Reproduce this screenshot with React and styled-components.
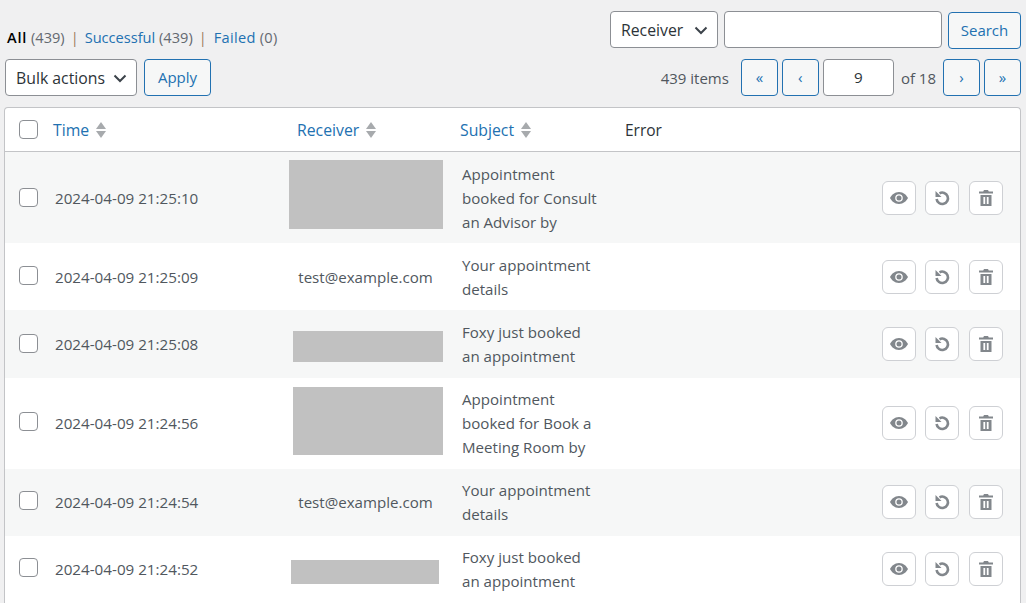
import React from 'react'
import styled, { createGlobalStyle } from 'styled-components'

const GlobalStyle = createGlobalStyle`
	html, body {
		margin: 0;
		padding: 0;
		background: #f0f0f1;
		overflow: hidden;
	}
	body {
		font-family: 'Open Sans', 'Noto Sans', sans-serif;
		font-size: 15.1px;
		color: #50575e;
	}
`

const Page = styled.div`
	width: 1026px;
	height: 603px;
	overflow: hidden;
	padding: 11px 5px 0 5px;
	box-sizing: border-box;
`

const TopRow = styled.div`
	display: flex;
	justify-content: space-between;
	align-items: flex-start;
	height: 48px;
`

const Filters = styled.ul`
	display: flex;
	list-style: none;
	margin: 0;
	padding: 15px 0 0 2px;
	line-height: 22px;
	font-size: 14.6px;
`

const FilterItem = styled.li`
	white-space: pre;
	color: #646970;

	&:last-child {
		margin-left: 1px;
		letter-spacing: 0.3px;
	}
`

const FilterLink = styled.span`
	color: ${(p) => (p.$current ? '#000' : '#2271b1')};
	font-weight: ${(p) => (p.$current ? 600 : 400)};
	letter-spacing: ${(p) => (p.$current ? '0.8px' : 'inherit')};
`

const Sep = styled.span`
	color: #9a7b60;
	margin: 0 6px;
`

const SearchBox = styled.div`
	display: flex;
	gap: 6px;
`

const Select = styled.div`
	display: flex;
	align-items: center;
	justify-content: space-between;
	box-sizing: border-box;
	width: ${(p) => p.$w}px;
	height: 37px;
	padding: 0 8px 0 10px;
	background: #fff;
	border: 1px solid #8c8f94;
	border-radius: 4px;
	color: #2c3338;
	font-size: 15.8px;
`

const TextInput = styled.div`
	box-sizing: border-box;
	width: ${(p) => p.$w}px;
	height: 37px;
	background: #fff;
	border: 1px solid #8c8f94;
	border-radius: 4px;
	color: #2c3338;
	text-align: center;
	line-height: 35px;
	font-size: 15.2px;
`

const Button = styled.div`
	box-sizing: border-box;
	width: ${(p) => p.$w}px;
	height: 37px;
	line-height: 35px;
	margin-top: ${(p) => p.$mt || 0}px;
	text-align: center;
	background: #f6f7f7;
	border: 1px solid #2271b1;
	border-radius: 4px;
	color: #2271b1;
	font-size: 15px;
`

const NavRow = styled.div`
	display: flex;
	justify-content: space-between;
	align-items: center;
	height: 37px;
`

const Group = styled.div`
	display: flex;
	align-items: center;
	gap: ${(p) => p.$gap}px;
`

const Count = styled.span`
	margin-right: 8px;
	font-size: 15px;
`

const PageTotal = styled.span`
	margin: 0 3px;
	font-size: 15px;
`

const Table = styled.div`
	box-sizing: border-box;
	width: 1017px;
	margin: 11px 0 0 -1px;
	background: #fff;
	border: 1px solid #c3c4c7;
	border-bottom: 0;
	border-radius: 4px 4px 0 0;
`

const HeadRow = styled.div`
	display: grid;
	grid-template-columns: 48px 244px 163px 165px 1fr;
	align-items: center;
	height: 43px;
	border-bottom: 1px solid #c3c4c7;
`

const Row = styled.div`
	display: grid;
	grid-template-columns: 50px 230px 177px 172px 1fr;
	align-items: center;
	box-sizing: border-box;
	height: ${(p) => p.$h}px;
	padding-bottom: ${(p) => p.$pb || 0}px;
	background: ${(p) => (p.$alt ? '#f6f7f7' : '#fff')};
`

const CheckCell = styled.div`
	padding-left: 14px;
	margin-bottom: ${(p) => p.$lift || 0}px;
	display: flex;
`

const Checkbox = styled.span`
	display: block;
	box-sizing: border-box;
	width: 19px;
	height: 19px;
	background: #fff;
	border: 1px solid #8c8f94;
	border-radius: 4px;
`

const SortLink = styled.span`
	display: flex;
	align-items: center;
	gap: 6px;
	color: #2271b1;
	font-size: 15.8px;
`

const HeadText = styled.span`
	color: #2c3338;
	font-size: 15.5px;
`

const Time = styled.div`
	white-space: nowrap;
	font-size: 15.2px;
`

const Receiver = styled.div`
	display: flex;
	justify-content: center;
	padding-right: 16px;
	white-space: nowrap;
`

// the grey blocks cover addresses, they do not sit centred in their row
const Redacted = styled.div`
	width: ${(p) => p.$w}px;
	height: ${(p) => p.$h}px;
	margin-left: ${(p) => p.$shift || 0}px;
	margin-top: ${(p) => Math.max(p.$dy, 0) * 2}px;
	margin-bottom: ${(p) => Math.max(-p.$dy, 0) * 2}px;
	background: #c1c1c1;
`

const Subject = styled.div`
	line-height: 24px;
	white-space: nowrap;
`

const Actions = styled.div`
	display: flex;
	justify-content: flex-end;
	gap: 9px;
	padding-right: 17px;
`

const IconButton = styled.div`
	box-sizing: border-box;
	width: 34px;
	height: 34px;
	display: flex;
	align-items: center;
	justify-content: center;
	background: #fff;
	border: 1px solid #ced0d4;
	border-radius: 6px;
	color: #82878c;

	&:last-child {
		margin-left: 1px;
	}
`

const Chevron = () => (
	<svg width='16' height='16' viewBox='0 0 16 16' fill='none' stroke='#3c434a' strokeWidth='2'>
		<path d='M2.5 5.5 8 11l5.5-5.5' />
	</svg>
)

const SortIcon = () => (
	<svg width='12' height='18' viewBox='0 0 12 18' fill='#a7aaad'>
		<path d='M6 1l5 7H1z' />
		<path d='M6 17l5-7H1z' />
	</svg>
)

const EyeIcon = () => (
	<svg width='20' height='20' viewBox='0 0 20 20' fill='currentColor'>
		<path
			fillRule='evenodd'
			d='M10 4C5.500 4 2.400 7.200 1 10c1.400 2.800 4.500 6 9 6s7.600-3.200 9-6c-1.400-2.800-4.500-6-9-6zm0 2.200a3.800 3.800 0 1 1 0 7.600 3.800 3.800 0 0 1 0-7.600zm0 1.300a2.500 2.500 0 1 0 0 5 2.500 2.500 0 0 0 0-5z'
		/>
	</svg>
)

const UndoIcon = () => (
	<svg width='20' height='20' viewBox='0 0 20 20' fill='none' stroke='currentColor' strokeWidth='2.6'>
		<path d='M7.500 5.300A5.700 5.700 0 1 1 4.600 11' />
		<path d='M3.500 3v6h6z' fill='currentColor' stroke='none' />
	</svg>
)

const TrashIcon = () => (
	<svg width='20' height='20' viewBox='0 0 20 20' fill='currentColor'>
		<path
			fillRule='evenodd'
			d='M8 2h4l.8 1.500H17V5.500H3V3.500h4.200zM4.500 7h11v11h-11zM7.400 9v7h1.800V9zm3.400 0v7h1.800V9z'
		/>
	</svg>
)

const rows = [
	{ h: 91, lift: 0, time: '2024-04-09 21:25:10', box: { w: 154, h: 69, shift: 0, dy: -3 }, subject: ['Appointment', 'booked for Consult', 'an Advisor by'], alt: true },
	{ h: 67, lift: 2, time: '2024-04-09 21:25:09', email: 'test@example.com', subject: ['Your appointment', 'details'] },
	{ h: 68, lift: 2, time: '2024-04-09 21:25:08', box: { w: 150, h: 31, shift: 4, dy: 2.5 }, subject: ['Foxy just booked', 'an appointment'], alt: true },
	{ h: 91, lift: 4, pb: 1, time: '2024-04-09 21:24:56', box: { w: 150, h: 68, shift: 4, dy: -2 }, subject: ['Appointment', 'booked for Book a', 'Meeting Room by'] },
	{ h: 67, lift: 4, pb: 1, time: '2024-04-09 21:24:54', email: 'test@example.com', subject: ['Your appointment', 'details'], alt: true },
	{ h: 67, lift: 4, pb: 1, time: '2024-04-09 21:24:52', box: { w: 148, h: 24, shift: -2, dy: 3 }, subject: ['Foxy just booked', 'an appointment'] },
]

const App = () => {
	return (
		<Page>
			<GlobalStyle />
			<TopRow>
				<Filters>
					<FilterItem>
						<FilterLink $current>All</FilterLink> (439)<Sep>|</Sep>
					</FilterItem>
					<FilterItem>
						<FilterLink>Successful</FilterLink> (439)<Sep>|</Sep>
					</FilterItem>
					<FilterItem>
						<FilterLink>Failed</FilterLink> (0)
					</FilterItem>
				</Filters>
				<SearchBox>
					<Select $w={108}>
						Receiver
						<Chevron />
					</Select>
					<TextInput $w={218} />
					<Button $w={73} $mt={1}>
						Search
					</Button>
				</SearchBox>
			</TopRow>
			<NavRow>
				<Group $gap={7}>
					<Select $w={132}>
						Bulk actions
						<Chevron />
					</Select>
					<Button $w={67}>Apply</Button>
				</Group>
				<Group $gap={4}>
					<Count>439 items</Count>
					<Button $w={37}>«</Button>
					<Button $w={37}>‹</Button>
					<TextInput $w={71}>9</TextInput>
					<PageTotal>of 18</PageTotal>
					<Button $w={37}>›</Button>
					<Button $w={37}>»</Button>
				</Group>
			</NavRow>
			<Table>
				<HeadRow>
					<CheckCell>
						<Checkbox />
					</CheckCell>
					<SortLink>
						Time <SortIcon />
					</SortLink>
					<SortLink>
						Receiver <SortIcon />
					</SortLink>
					<SortLink>
						Subject <SortIcon />
					</SortLink>
					<HeadText>Error</HeadText>
				</HeadRow>
				{rows.map((row) => (
					<Row key={row.time} $h={row.h} $pb={row.pb} $alt={row.alt}>
						<CheckCell $lift={row.lift}>
							<Checkbox />
						</CheckCell>
						<Time>{row.time}</Time>
						<Receiver>
							{row.email ? (
								row.email
							) : (
								<Redacted $w={row.box.w} $h={row.box.h} $shift={row.box.shift} $dy={row.box.dy} />
							)}
						</Receiver>
						<Subject>
							{row.subject.map((line) => (
								<div key={line}>{line}</div>
							))}
						</Subject>
						<Actions>
							<IconButton>
								<EyeIcon />
							</IconButton>
							<IconButton>
								<UndoIcon />
							</IconButton>
							<IconButton>
								<TrashIcon />
							</IconButton>
						</Actions>
					</Row>
				))}
			</Table>
		</Page>
	)
}

export default App
